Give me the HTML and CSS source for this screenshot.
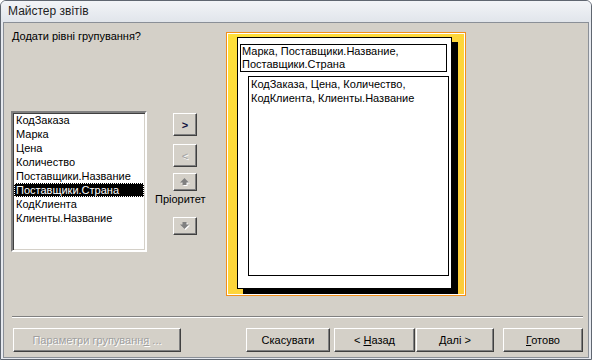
FILE: index.html
```html
<!DOCTYPE html>
<html lang="uk">
<head>
    <meta charset="UTF-8">
    <title>Майстер звітів</title>
    <link rel="stylesheet" href="styles.css">
</head>
<body>
    <div class="window">
        <div class="titlebar">Майстер звітів</div>
        <div class="client">
            <div class="main">
                <!-- ліва частина: питання, список полів, кнопки -->
                <div class="left">
                    <div class="prompt">Додати рівні групування?</div>
                    <div class="picker">
                        <ul class="fields">
                            <li>КодЗаказа</li>
                            <li>Марка</li>
                            <li>Цена</li>
                            <li>Количество</li>
                            <li>Поставщики.Название</li>
                            <li class="selected">Поставщики.Страна</li>
                            <li>КодКлиента</li>
                            <li>Клиенты.Название</li>
                        </ul>
                        <div class="movers">
                            <button class="btn mover add">&gt;</button>
                            <button class="btn mover remove" disabled>&lt;</button>
                            <button class="btn arrow" disabled>
                                <svg width="10" height="8" viewBox="0 0 10 8">
                                    <polygon points="5.5,1 10,5.5 7.5,5.5 7.5,8 3.5,8 3.5,5.5 1,5.5" fill="#fff"/>
                                    <polygon points="4.5,0 9,4.5 6.5,4.5 6.5,7 2.5,7 2.5,4.5 0,4.5" fill="#808080"/>
                                </svg>
                            </button>
                            <div class="priority">Пріоритет</div>
                            <button class="btn arrow down" disabled>
                                <svg width="10" height="8" viewBox="0 0 10 8">
                                    <polygon points="3.5,1 7.5,1 7.5,3.5 10,3.5 5.5,8 1,3.5 3.5,3.5" fill="#fff"/>
                                    <polygon points="2.5,0 6.5,0 6.5,2.5 9,2.5 4.5,7 0,2.5 2.5,2.5" fill="#808080"/>
                                </svg>
                            </button>
                        </div>
                    </div>
                </div>

                <!-- попередній перегляд звіту -->
                <div class="preview">
                    <div class="page">
                        <div class="group-head">Марка, Поставщики.Название,<br>Поставщики.Страна</div>
                        <div class="detail">КодЗаказа, Цена, Количество,<br>КодКлиента, Клиенты.Название</div>
                    </div>
                </div>
            </div>

            <div class="separator"></div>

            <div class="buttons">
                <button class="btn wide" disabled>Параметри групуванн<u>я</u> ...</button>
                <button class="btn cancel">Скасувати</button>
                <button class="btn back">&lt; <u>Н</u>азад</button>
                <button class="btn next"><u>Д</u>алі &gt;</button>
                <button class="btn finish"><u>Г</u>отово</button>
            </div>
        </div>
    </div>
</body>
</html>
```

FILE: styles.css
```css
body {
    margin: 0;
    font-family: "Liberation Sans", Arial, sans-serif;
    font-size: 11px;
    color: #000;
}
/* рамка вікна */
.window {
    width: 592px;
    height: 360px;
    box-sizing: border-box;
    border: 1px solid #5f6670;
    border-radius: 6px 6px 0 0;
    padding: 0 2px 1px 2px;
    background: #e6e9ef;
    display: flex;
    flex-direction: column;
}
.titlebar {
    height: 21px;
    line-height: 21px;
    padding-left: 7px;
    font-size: 12px;
    color: #1e1e1e;
    background: linear-gradient(#f2f4f7, #e1e5eb);
    margin: 0 -2px;
    border-radius: 5px 5px 0 0;
}
.client {
    flex: 1;
    border: 1px solid #8a8f97;
    background: #d4d0c8;
    display: flex;
    flex-direction: column;
}
.main {
    height: 293px;
    box-sizing: border-box;
    padding: 6px 0 0 7px;
    display: flex;
}
.left {
    width: 208px;
}
.prompt {
    line-height: 13px;
    padding: 1px 0 0 1px;
}
.picker {
    margin-top: 68px;
    display: flex;
    gap: 8px;
}
/* список полів з заглибленою рамкою */
.fields {
    list-style: none;
    margin: 0;
    padding: 0 1px;
    width: 136px;
    height: 141px;
    box-sizing: border-box;
    background: #fff;
    border: 2px solid;
    border-color: #808080 #fff #fff #808080;
    box-shadow: inset 1px 1px #404040, inset -1px -1px #d4d0c8;
}
.fields li {
    height: 14px;
    line-height: 14px;
    padding-left: 2px;
    white-space: nowrap;
}
.fields li.selected {
    background: #000;
    color: #fff;
    outline: 1px dotted #fff;
    outline-offset: -1px;
}
.movers {
    width: 56px;
    display: flex;
    flex-direction: column;
    align-items: flex-start;
    padding-top: 2px;
}
.btn {
    font-family: inherit;
    font-size: 11px;
    color: #000;
    background: #d4d0c8;
    border: 1px solid;
    border-color: #fff #404040 #404040 #fff;
    box-shadow: inset -1px -1px #808080;
    padding: 0;
    margin: 0;
    box-sizing: border-box;
}
.btn:disabled {
    color: #a0a0a0;
    text-shadow: 1px 1px 0 #fff;
}
.mover {
    width: 24px;
    height: 23px;
    line-height: 20px;
    margin-left: 18px;
}
.mover.add {
    font-weight: bold;
    color: #101040;
}
.mover.remove {
    margin-top: 8px;
}
.arrow {
    width: 24px;
    height: 18px;
    margin: 6px 0 0 18px;
    display: flex;
    align-items: center;
    justify-content: center;
}
.arrow svg {
    display: block;
}
.arrow.down {
    margin-top: 11px;
}
.priority {
    margin-top: 2px;
    line-height: 13px;
    white-space: nowrap;
}
/* жовта рамка з макетом сторінки */
.preview {
    margin: 3px 0 0 7px;
    width: 240px;
    height: 264px;
    box-sizing: border-box;
    border: 1px solid #f39019;
    box-shadow: inset 0 0 0 1px #fff;
    background: linear-gradient(135deg, #ffe03a, #fccb3a);
    padding: 4px 0 0 10px;
}
.page {
    width: 215px;
    height: 252px;
    box-sizing: border-box;
    background: #fff;
    border: 1px solid #000;
    box-shadow: 6px 5px 0 #000;
    padding: 6px 2px 0 2px;
}
.group-head {
    border: 1px solid #000;
    width: 207px;
    box-sizing: border-box;
    line-height: 13px;
    padding: 0 1px;
}
.detail {
    margin: 4px 0 0 8px;
    width: 201px;
    height: 200px;
    box-sizing: border-box;
    border: 1px solid #000;
    line-height: 14px;
    padding: 0 2px;
}
.separator {
    margin: 0 5px 0 8px;
    border-top: 1px solid #808080;
    border-bottom: 1px solid #fff;
}
.buttons {
    margin-top: 10px;
    padding: 0 5px 0 9px;
    display: flex;
}
.buttons .btn {
    height: 24px;
}
.wide {
    width: 168px;
}
.cancel {
    width: 84px;
    margin-left: auto;
}
.back {
    width: 81px;
    margin-left: 4px;
}
.next {
    width: 78px;
    margin-left: 1px;
}
.finish {
    width: 80px;
    margin-left: 9px;
}
```
